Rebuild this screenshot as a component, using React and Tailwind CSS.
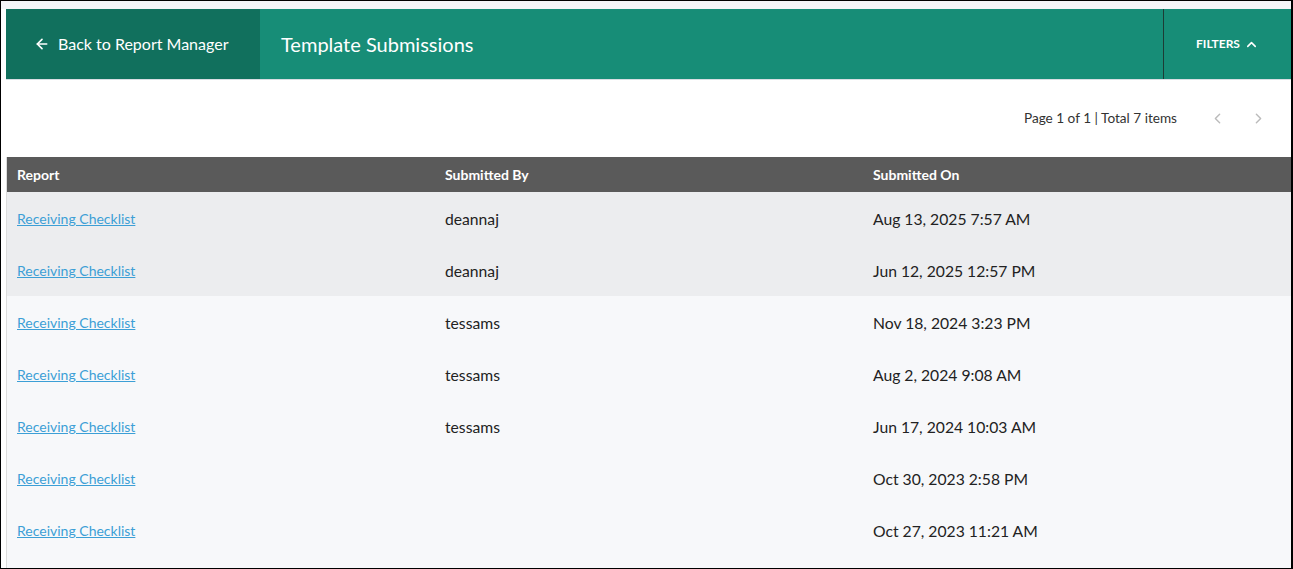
import { ArrowLeft, ChevronUp, ChevronLeft, ChevronRight } from "lucide-react";

const rows = [
    { by: "deannaj", on: "Aug 13, 2025 7:57 AM", hi: true },
    { by: "deannaj", on: "Jun 12, 2025 12:57 PM", hi: true },
    { by: "tessams", on: "Nov 18, 2024 3:23 PM" },
    { by: "tessams", on: "Aug 2, 2024 9:08 AM" },
    { by: "tessams", on: "Jun 17, 2024 10:03 AM" },
    { by: "", on: "Oct 30, 2023 2:58 PM" },
    { by: "", on: "Oct 27, 2023 11:21 AM" },
];

export default function App() {
    return (<div className="flex h-[569px] w-[1293px] flex-col overflow-hidden border border-r-2 border-black bg-white font-['Lato','Open_Sans',sans-serif] text-[#222]">
        <div className="h-[8px] shrink-0 bg-[#f4f5f8]" />
        <div className="flex flex-1 flex-col pl-[5px]">
            {/* header bar */}
            <div className="flex h-[70px] shrink-0 bg-[#178d77] text-white">
                <div className="flex w-[254px] items-center gap-[8px] bg-[#11705d] pl-[28px] text-[16px]">
                    <ArrowLeft className="h-[16px] w-[16px]" strokeWidth={2.5} />
                    <span>Back to Report Manager</span>
                </div>
                <div className="flex flex-1 items-center pl-[21px] text-[20px]">Template Submissions</div>
                <div className="flex w-[128px] items-center justify-center gap-[4px] border-l border-[#1d3b35] text-[12px] font-bold">
                    FILTERS
                    <ChevronUp className="h-[15px] w-[15px]" strokeWidth={2.5} />
                </div>
            </div>

            {/* pagination */}
            <div className="flex h-[78px] shrink-0 items-center justify-end border-t border-[#d9dde3] pr-[24px] text-[13.6px] text-[#333]">
                <span className="mr-[32px]">Page 1 of 1 | Total 7 items</span>
                <ChevronLeft className="mr-[24px] h-[17px] w-[17px] text-[#bbb]" />
                <ChevronRight className="h-[17px] w-[17px] text-[#bbb]" />
            </div>

            {/* table */}
            <div className="flex-1 border-l border-[#dcdcdc] bg-[#f7f8fa]">
                <div className="grid h-[35px] grid-cols-3 items-center bg-[#5a5a5a] text-[14px] font-bold text-white">
                    <div className="pl-[10px]">Report</div>
                    <div className="pl-[10px]">Submitted By</div>
                    <div className="pl-[10px]">Submitted On</div>
                </div>
                {rows.map((r, i) => (<div key={i} className={`grid h-[52px] grid-cols-3 items-center ${r.hi ? "bg-[#ecedef]" : "bg-[#f7f8fa]"}`}>
                    <div className="pl-[10px]">
                        <a href="#" className="text-[14px] text-[#3c9fd6] underline">Receiving Checklist</a>
                    </div>
                    <div className="pl-[10px] pt-[3px] text-[15.7px]">{r.by}</div>
                    <div className="pl-[10px] pt-[3px] text-[15.7px]">{r.on}</div>
                </div>))}
            </div>
        </div>
    </div>);
}
